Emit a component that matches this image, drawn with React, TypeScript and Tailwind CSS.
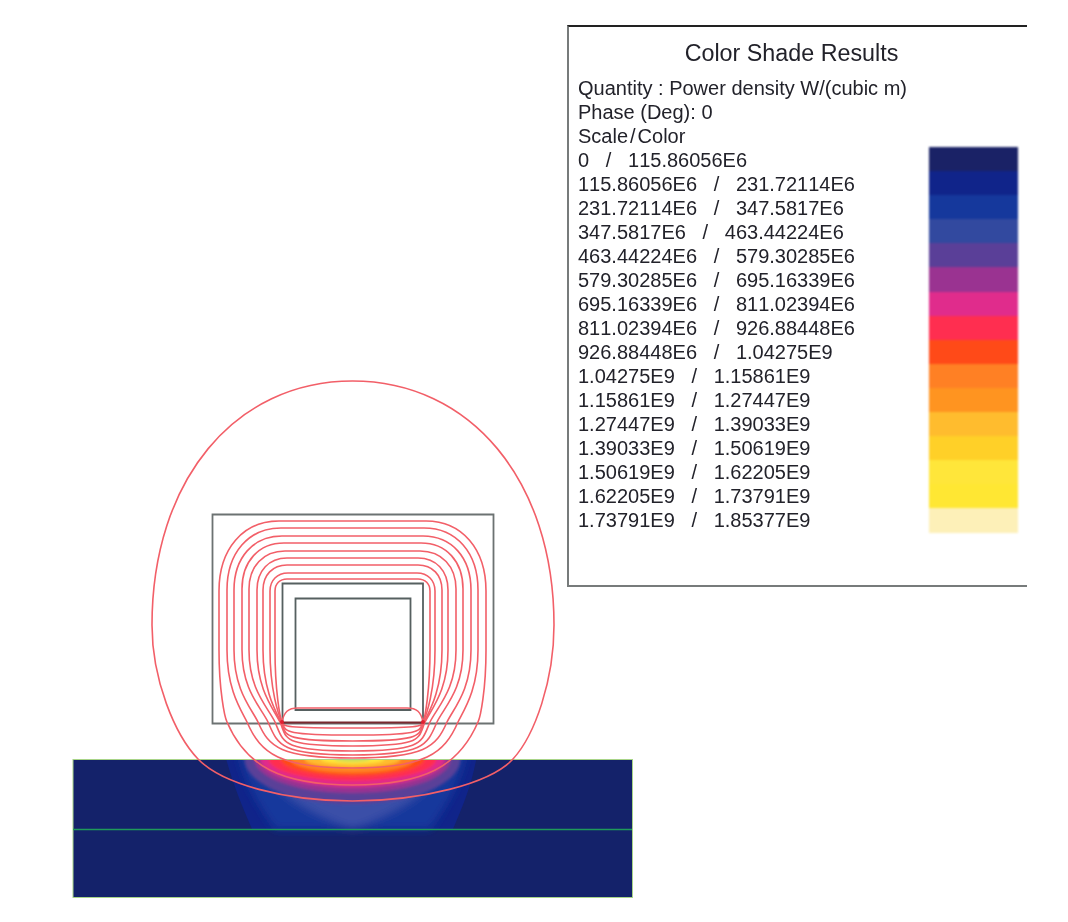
const ROWS = [
  "Quantity : Power density W/(cubic m)",
  "Phase (Deg): 0",
];

const SCALE = [
  "0   /   115.86056E6",
  "115.86056E6   /   231.72114E6",
  "231.72114E6   /   347.5817E6",
  "347.5817E6   /   463.44224E6",
  "463.44224E6   /   579.30285E6",
  "579.30285E6   /   695.16339E6",
  "695.16339E6   /   811.02394E6",
  "811.02394E6   /   926.88448E6",
  "926.88448E6   /   1.04275E9",
  "1.04275E9   /   1.15861E9",
  "1.15861E9   /   1.27447E9",
  "1.27447E9   /   1.39033E9",
  "1.39033E9   /   1.50619E9",
  "1.50619E9   /   1.62205E9",
  "1.62205E9   /   1.73791E9",
  "1.73791E9   /   1.85377E9",
];

const BANDS = [
  "bg-[#1a2266]",
  "bg-[#10248a]",
  "bg-[#15389c]",
  "bg-[#32499f]",
  "bg-[#5a3f98]",
  "bg-[#9a3391]",
  "bg-[#e02c8c]",
  "bg-[#ff2e50]",
  "bg-[#ff4a18]",
  "bg-[#ff8024]",
  "bg-[#ff9420]",
  "bg-[#ffbc2e]",
  "bg-[#ffd028]",
  "bg-[#ffe63a]",
  "bg-[#ffe733]",
  "bg-[#fdf0b8]",
];

// left edge, top edge, corner width, corner height, x where it passes the yoke bottom, lowest point
const FLUX = [
  [219, 521, 60, 70, 227, 785],
  [227, 528, 54, 62, 247, 768],
  [234, 536, 48, 54, 258, 758],
  [242, 543, 42, 46, 268, 755],
  [249, 551, 36, 38, 275, 751],
  [257, 558, 30, 32, 280, 746],
  [263, 565, 24, 25, 281, 741],
  [270, 573, 18, 18, 282, 735],
  [275, 579, 12, 12, 282, 728],
];

// half ellipses hanging from the top of the plate, widest first
const HEAT = [
  [108, 45, "#5a3f98"],
  [98, 34, "#9a3391"],
  [92, 28, "#e02c8c"],
  [84, 22, "#ff2e50"],
  [72, 17, "#ff4a18"],
  [62, 14, "#ff8024"],
  [48, 9, "#ffbc2e"],
  [32, 5, "#ffe838"],
] as const;

const CX = 352.5;
const YOKE = 722;

// closed flux line: over the yoke, down each side, then under it
function fluxPath([l, t, cw, ch, xc, b]: number[]) {
  const r = CX * 2 - l;
  const xr = CX * 2 - xc;
  const k = 0.4;
  const w = xc - l;
  const d = b - YOKE;
  return [
    `M${l} ${t + ch}`,
    `C${l} ${t + ch * k} ${l + cw * k} ${t} ${l + cw} ${t}`,
    `H${r - cw}`,
    `C${r - cw * k} ${t} ${r} ${t + ch * k} ${r} ${t + ch}`,
    `V650 C${r} 690 ${xr + w * 0.3} ${YOKE - w * 0.6} ${xr} ${YOKE}`,
    `C${xr - d * 0.3} ${YOKE + d * 0.7} ${CX + 72} ${b} ${CX} ${b}`,
    `C${CX - 72} ${b} ${xc + d * 0.3} ${YOKE + d * 0.7} ${xc} ${YOKE}`,
    `C${xc - w * 0.3} ${YOKE - w * 0.6} ${l} 690 ${l} 650 Z`,
  ].join(" ");
}

function Plot() {
  return (
    <svg
      viewBox="72 380 562 520"
      className="col-start-1 row-start-1 mt-[380px] ml-[72px] h-[520px] w-[562px] blur-[0.5px]"
      fill="none"
    >
      <defs>
        <clipPath id="plate">
          <rect x="73" y="760" width="559" height="137" />
        </clipPath>
        <filter id="soft" x="-10%" y="-10%" width="120%" height="120%">
          <feGaussianBlur stdDeviation="1.4" />
        </filter>
        <filter id="softer" x="-10%" y="-10%" width="120%" height="120%">
          <feGaussianBlur stdDeviation="4" />
        </filter>
      </defs>

      {/* workpiece */}
      <rect x="73" y="759.5" width="559.5" height="138" fill="#14226a" stroke="#a8d488" />
      <g clipPath="url(#plate)">
        <path d="M225 755H477C472 785 462 808 453 829H252C243 808 233 785 225 755Z" fill="#10248a" />
        <g filter="url(#softer)">
          <path d="M238 750H467C460 785 445 808 430 829H275C260 808 245 785 238 750Z" fill="#15389c" />
          <path d="M250 750H455C435 795 390 815 352.5 829C315 815 270 795 250 750Z" fill="#3a4fa8" />
        </g>
        <g filter="url(#soft)">
          {HEAT.map(([rx, ry, color]) => (
            <ellipse key={color} cx={CX} cy="759" rx={rx} ry={ry} fill={color} />
          ))}
          <ellipse cx={CX} cy="759" rx="18" ry="3" fill="#c8dc5a" />
        </g>
      </g>
      <path d="M73 829.5H632" stroke="#1f9a5a" strokeWidth="1.6" />

      {/* inductor */}
      <path d="M212.5 514.5H493.5V723.5H212.5Z" stroke="#6c7272" strokeWidth="1.8" />
      <path d="M282.5 723V583.5H423V723" stroke="#566060" strokeWidth="1.8" />
      <path d="M295.5 598.5H410.5V710H295.5Z" stroke="#566060" strokeWidth="1.8" />

      {/* flux lines */}
      <g stroke="#f25f68" strokeWidth="1.6">
        {FLUX.map((f) => (
          <path key={f[0]} d={fluxPath(f)} />
        ))}
        <path d="M282 722C284 712 288 708 298 708H407C417 708 421 712 423 722" />
        <path d="M352.5 381C470 381 554 480 554 625C554 680 535 735 513 759C490 784 420 801 352.5 801C285 801 222 784 198 759C175 735 152 680 152 625C152 480 235 381 352.5 381Z" />
      </g>
      <path d="M283 722.5H422" stroke="#7a2a30" strokeWidth="1.8" />
      <circle cx="282" cy={YOKE} r="2" fill="#e02030" />
      <circle cx="423" cy={YOKE} r="2" fill="#e02030" />
    </svg>
  );
}

function Legend() {
  return (
    <div className="col-start-1 row-start-1 mt-[25px] ml-[567px] h-[562px] w-[460px] self-start border-t-2 border-b-2 border-l-2 border-t-[#222222] border-b-[#777b7b] border-l-[#777b7b] bg-white pt-[12px] pr-[9px] pl-[9px] text-[#22222a]">
      <h2 className="pr-[13px] text-center text-[23.3px] leading-[28px] font-normal blur-[0.3px]">Color Shade Results</h2>
      <div className="mt-[9px] flex items-start justify-between">
        <div className="text-[20px] leading-[24px] whitespace-pre blur-[0.3px]">
          {ROWS.map((r) => (
            <div key={r}>{r}</div>
          ))}
          <div>
            Scale<span className="mx-[2px]">/</span>Color
          </div>
          {SCALE.map((r) => (
            <div key={r} className="[font-kerning:none]">
              {r}
            </div>
          ))}
        </div>
        <div className="mt-[71px] flex w-[89px] flex-col blur-[0.8px]">
          {BANDS.map((c) => (
            <div key={c} className={`h-[24.1px] ${c}`} />
          ))}
        </div>
      </div>
    </div>
  );
}

export default function App() {
  return (
    <div className="grid h-[922px] w-[1068px] bg-white font-['Liberation_Sans',Arial,sans-serif]">
      <Plot />
      <Legend />
    </div>
  );
}
